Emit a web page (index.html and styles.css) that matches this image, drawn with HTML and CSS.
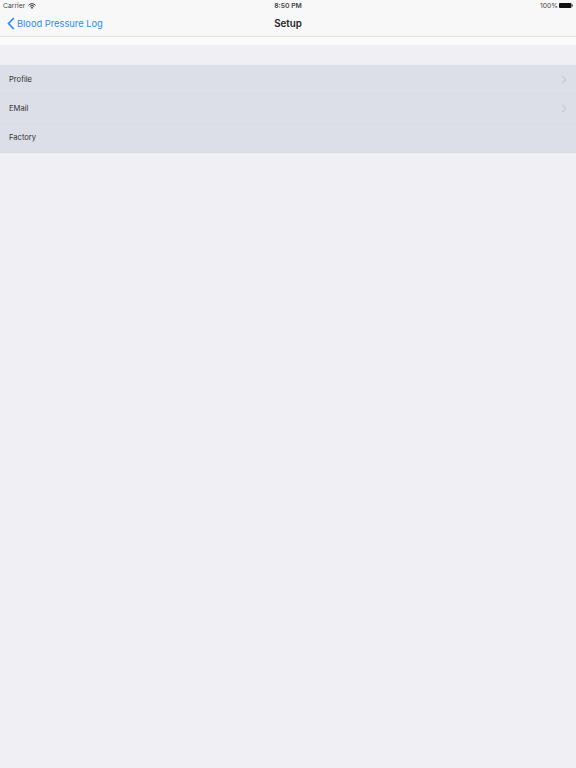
FILE: index.html
```html
<!DOCTYPE html>
<html lang="en">

<head>
    <meta charset="UTF-8">
    <meta name="viewport" content="width=device-width, initial-scale=1.0">
    <title>Setup</title>
    <link rel="stylesheet" href="styles.css">
</head>

<body>
    <div class="topbar">
        <div class="status">
            <div class="status-left">
                <span>Carrier</span>
                <svg width="8" height="6" viewBox="0 0 16 12"><path d="M1 4.500C5 .5 11 .5 15 4.500M3.500 7C6 4.800 10 4.800 12.500 7" fill="none" stroke="#222" stroke-width="2"/><path d="M8 12 5.500 9.200C7 8 9 8 10.500 9.200z" fill="#222"/></svg>
            </div>
            <div class="status-time">8:50 PM</div>
            <div class="status-right">
                <span>100%</span>
                <svg width="14" height="5" viewBox="0 0 14 5"><rect width="12.500" height="5" rx="1" fill="#111"/><rect x="13" y="1.500" width="1" height="2" fill="#555"/></svg>
            </div>
        </div>
        <div class="nav">
            <a class="back" href="javascript:;">
                <svg width="8" height="13" viewBox="0 0 8 13"><path d="M6.800 1 1.500 6.500l5.300 5.500" fill="none" stroke="#2a8bf5" stroke-width="1.700"/></svg>
                Blood Pressure Log
            </a>
            <div class="nav-title">Setup</div>
        </div>
    </div>
    <div class="band"></div>
    <div class="list">
        <div class="row">
            <span>Profile</span>
            <svg width="6" height="9" viewBox="0 0 6 9"><path d="M1 .8 4.800 4.500 1 8.200" fill="none" stroke="#c9cdd4" stroke-width="1.300"/></svg>
        </div>
        <div class="row">
            <span>EMail</span>
            <svg width="6" height="9" viewBox="0 0 6 9"><path d="M1 .8 4.800 4.500 1 8.200" fill="none" stroke="#c9cdd4" stroke-width="1.300"/></svg>
        </div>
        <div class="row">
            <span>Factory</span>
        </div>
    </div>
</body>

</html>
```

FILE: styles.css
```css
*{
    margin: 0;
    padding: 0;
    box-sizing: border-box;
}
body{
    background: #efeff4;
    font-family: Inter, "Liberation Sans", sans-serif;
    color: #333;
}
.topbar{
    height: 37px;
    background: #f8f8f8;
    border-bottom: 1px solid #e2e2e4;
}
.status{
    display: grid;
    grid-template-columns: 1fr auto 1fr;
    align-items: center;
    height: 11px;
    padding: 0 3px;
    font-size: 6.8px;
    color: #444;
}
.status-left{
    display: flex;
    align-items: center;
    gap: 3px;
}
.status-time{
    font-weight: 600;
}
.status-right{
    display: flex;
    align-items: center;
    justify-content: flex-end;
    gap: 1px;
}
.nav{
    position: relative;
    display: flex;
    align-items: center;
    justify-content: center;
    height: 25px;
}
.back{
    position: absolute;
    left: 7px;
    top: 0;
    display: flex;
    align-items: center;
    gap: 2px;
    height: 25px;
    color: #2a8bf5;
    font-size: 9.3px;
    text-decoration: none;
}
.nav-title{
    font-size: 9.8px;
    font-weight: 600;
    color: #222;
}
.band{
    height: 8px;
    background: #fbfbfb;
}
.list{
    margin-top: 20px;
}
.row{
    display: flex;
    align-items: center;
    justify-content: space-between;
    height: 29.3px;
    padding: 0 9px;
    background: #dcdfe7;
    border-bottom: 1px solid #d8dbe3;
    font-size: 7.6px;
}
```
